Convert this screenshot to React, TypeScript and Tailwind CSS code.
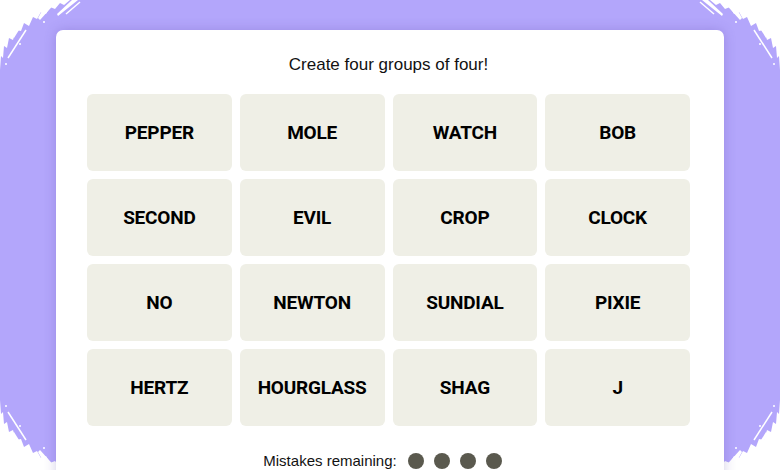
import React from "react";

const words = [
  "PEPPER", "MOLE", "WATCH", "BOB",
  "SECOND", "EVIL", "CROP", "CLOCK",
  "NO", "NEWTON", "SUNDIAL", "PIXIE",
  "HERTZ", "HOURGLASS", "SHAG", "J",
];

function Brush({ className, flipX, flipY }: { className: string; flipX?: boolean; flipY?: boolean }) {
  const t = `scale(${flipX ? -1 : 1}, ${flipY ? -1 : 1})`;
  return (
    <svg
      className={className}
      width="90"
      height="90"
      viewBox="0 0 90 90"
      style={{ transform: t }}
    >
      <polygon
        fill="#ffffff"
        points="0,0 70,0 64,5 60,3 55,9 50,7 46,14 41,12 37,19 33,17 29,26 24,23 21,31 16,30 13,40 9,38 7,48 4,46 3,58 1,56 0,70"
      />
      <polygon fill="#ffffff" points="48,0 58,0 40,20 38,18" />
      <polygon fill="#ffffff" points="72,0 78,0 58,16 57,14" />
      <polygon fill="#ffffff" points="30,6 34,6 14,38 12,36" />
      <line x1="80" y1="2" x2="66" y2="14" stroke="#ffffff" strokeWidth="1.5" />
      <line x1="26" y1="30" x2="8" y2="58" stroke="#ffffff" strokeWidth="1.5" />
      <circle cx="20" cy="44" r="1" fill="#ffffff" />
      <circle cx="44" cy="22" r="1" fill="#ffffff" />
      <circle cx="6" cy="64" r="1" fill="#ffffff" />
    </svg>
  );
}

export default function App() {
  return (
    <div className="relative h-[470px] w-[780px] overflow-hidden bg-[#b3a6fb]">
      <Brush className="absolute left-0 top-0" />
      <Brush className="absolute right-0 top-0" flipX />
      <Brush className="absolute left-0 bottom-0" flipY />
      <Brush className="absolute right-0 bottom-0" flipX flipY />
      <div
        className="relative ml-[56px] mt-[30px] h-[460px] w-[668px] rounded-[7px] bg-white pl-[31px] pt-[23px] shadow-[0_0_12px_rgba(80,60,160,0.25)]"
        style={{ fontFamily: "'Liberation Sans', Arial, sans-serif" }}
      >
        <div className="w-[603px] text-center text-[17px] leading-[24px] text-[#121212]">
          Create four groups of four!
        </div>
        <div className="mt-[17px] grid w-[603px] grid-cols-4 gap-x-[8px] gap-y-[8px]">
          {words.map((w) => (
            <div
              key={w}
              className="flex h-[77px] items-center justify-center rounded-[6px] bg-[#efefe6] pt-[2px] text-[19px] font-bold tracking-[-0.2px] text-black"
              style={{ fontFamily: "Roboto, 'Liberation Sans', sans-serif" }}
            >
              {w}
            </div>
          ))}
        </div>
        <div className="mt-[24px] flex w-[591px] items-center justify-center text-[15px] text-[#121212]">
          <span className="mr-[11px]">Mistakes remaining:</span>
          <div className="flex gap-[10px]">
            <span className="h-[16px] w-[16px] rounded-full bg-[#5a594e]" />
            <span className="h-[16px] w-[16px] rounded-full bg-[#5a594e]" />
            <span className="h-[16px] w-[16px] rounded-full bg-[#5a594e]" />
            <span className="h-[16px] w-[16px] rounded-full bg-[#5a594e]" />
          </div>
        </div>
      </div>
    </div>
  );
}
